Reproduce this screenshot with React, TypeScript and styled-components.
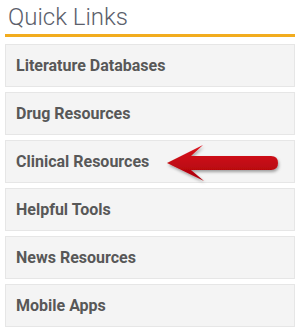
import React from 'react';
import styled, { createGlobalStyle } from 'styled-components';

const GlobalStyle = createGlobalStyle`
  body {
    margin: 0;
    background: #ffffff;
    font-family: Roboto, "Liberation Sans", Arial, sans-serif;
  }
`;

const Panel = styled.div`
  width: 290px;
  padding: 0 5px;
`;

const Title = styled.h2`
  margin: 0;
  padding: 5px 0 4px 3px;
  font-size: 24px;
  font-weight: 300;
  line-height: 25px;
  color: #5b606b;
  border-bottom: 3px solid #f2ac1e;
`;

const LinkList = styled.ul`
  list-style: none;
  margin: 7px 0 0;
  padding: 0;
  display: flex;
  flex-direction: column;
  gap: 5px;
`;

const LinkItem = styled.li`
  position: relative;
  height: 41px;
  display: flex;
  align-items: center;
  padding-left: 10px;
  background: #f4f4f4;
  border: 1px solid #e6e6e6;
  font-size: 16px;
  font-weight: 700;
  color: #585858;
`;

const Arrow = styled.svg`
  position: absolute;
  left: 160px;
  top: 2px;
`;

const links = [
  'Literature Databases',
  'Drug Resources',
  'Clinical Resources',
  'Helpful Tools',
  'News Resources',
  'Mobile Apps',
];

const RedArrow = () => (
  <Arrow width="122" height="42" viewBox="0 0 122 42">
    <defs>
      <linearGradient id="ar" x1="0" y1="0" x2="0" y2="1">
        <stop offset="0" stopColor="#dc151c" />
        <stop offset="1" stopColor="#a9000b" />
      </linearGradient>
      <filter id="sh" x="-10%" y="-20%" width="130%" height="160%">
        <feDropShadow dx="1" dy="2" stdDeviation="1.5" floodColor="#000" floodOpacity="0.35" />
      </filter>
    </defs>
    <path
      d="M1 20 L37 2 L25 13 L105 13 Q112 13 112 20 Q112 27 105 27 L25 27 L38 38 Z"
      fill="url(#ar)"
      filter="url(#sh)"
    />
  </Arrow>
);

export default function App() {
  return (
    <>
      <GlobalStyle />
      <Panel>
        <Title>Quick Links</Title>
        <LinkList>
          {links.map((l) => (
            <LinkItem key={l}>
              {l}
              {l === 'Clinical Resources' && <RedArrow />}
            </LinkItem>
          ))}
        </LinkList>
      </Panel>
    </>
  );
}
